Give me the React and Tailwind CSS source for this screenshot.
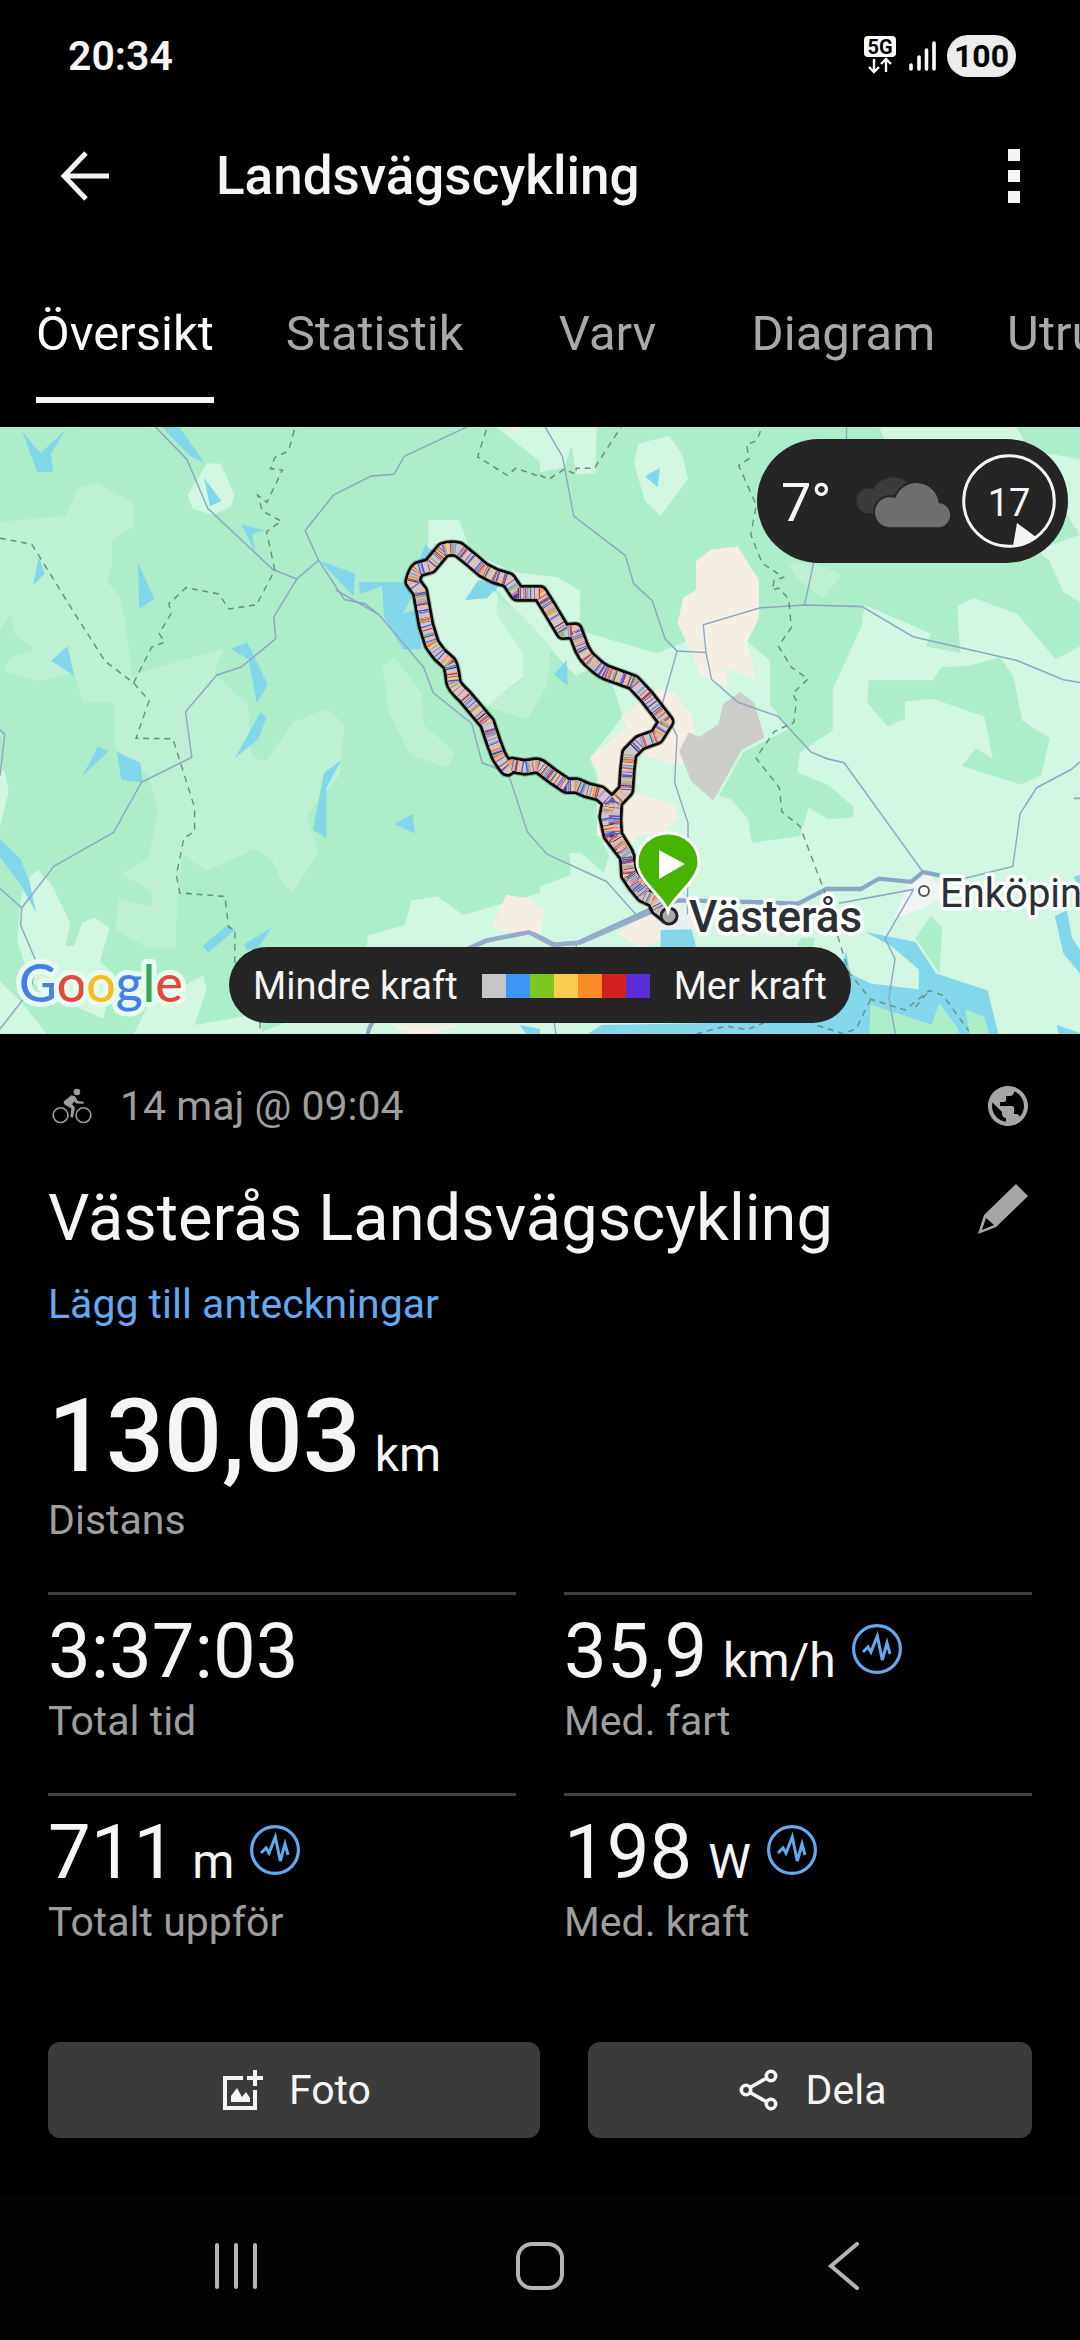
import { MdPublic } from "react-icons/md";

const tabs = ["Översikt", "Statistik", "Varv", "Diagram", "Utrustning"];

const metrics = [
  { label: "Total tid", value: "3:37:03" },
  { label: "Med. fart", value: "35,9", unit: "km/h", graph: true },
  { label: "Totalt uppför", value: "711", unit: "m", graph: true },
  { label: "Med. kraft", value: "198", unit: "W", graph: true }
];

const powerColors = ["#c6c6c6", "#3e97f5", "#7cc81e", "#fbcd4f", "#fb8b24", "#d3211f", "#5b2dd6"];

// Ride track, both directions share the last stretch into town
const loopPath =
  "M866 1190 L835 1165 L822 1140 L790 1125 L765 1095 L745 1065 L742 1010 L715 975 L692 945 L680 890 L688 845 L660 820 L620 810 L590 797 L560 797 L520 770 L480 740 Q470 735 460 738 L435 742 L395 735 L382 745 Q365 725 355 705 L340 665 L322 610 L290 572 L255 530 Q222 500 220 485 Q214 435 208 430 L180 405 Q160 380 155 370 L138 315 L128 260 L120 215 L98 185 Q105 155 115 148 L150 138 L190 90 Q212 82 235 88 L275 120 L310 150 L345 168 L385 180 L412 220 L480 220 L505 260 L550 335 L585 332 L605 385 Q620 415 635 425 Q660 450 680 458 L760 487 L800 530 L858 605 L830 650 L780 668 L748 700 L742 750 L738 810 L705 845 L702 900 L705 945 L738 1000 L750 1060 L795 1120";

const stripes = [
  { color: "#6a4fc4", dash: "4 31 3 47 7 23 3 64", offset: 0 },
  { color: "#e0453f", dash: "3 26 4 53 3 38 5 71", offset: 17 },
  { color: "#f59a55", dash: "5 19 3 43 8 57", offset: 9 },
  { color: "#f2cf72", dash: "4 23 6 35 3 49", offset: 31 },
  { color: "#6ea6ea", dash: "5 29 4 17 6 61", offset: 41 },
  { color: "#94b97e", dash: "4 67 6 59 3 83", offset: 53 },
  { color: "#4d2fb5", dash: "2 37 2 91 3 15", offset: 23 },
  { color: "#f3b8a0", dash: "6 33 5 21 4 45", offset: 3 },
  { color: "#c5303c", dash: "2 44 3 29 2 78", offset: 60 },
  { color: "#3a62d8", dash: "2 51 3 88 4 40", offset: 12 },
  { color: "#181818", dash: "2 118 2 173", offset: 70 }
];

const SignalIcons = () => (
  <svg viewBox="0 0 74 44" className="h-11 w-[74px]" aria-hidden="true">
    <rect x="1" y="2" width="32" height="21" rx="4" fill="#fff" />
    <text x="17" y="20" textAnchor="middle" fontSize="20" fontWeight="700" fontFamily="Roboto, sans-serif" fill="#000">
      5G
    </text>
    <path d="M11 25v12M6 33l5 5 5-5M23 38V26M18 30l5-5 5 5" fill="none" stroke="#fff" strokeWidth="2.4" />
    <path d="M48 31v4M56 23v12M63.500 16v19M71 9v26" fill="none" stroke="#fff" strokeWidth="3.600" strokeLinecap="round" />
  </svg>
);

const GraphIcon = () => (
  <svg viewBox="0 0 50 50" className="h-[50px] w-[50px] self-start" fill="none" stroke="#64a8f0" aria-hidden="true">
    <circle cx="25" cy="25" r="23.400" strokeWidth="3.200" />
    <path d="M11 28l5-5 3 5 6.300-16 5 24 4.700-17 3 11" strokeWidth="3" />
  </svg>
);

const BikeIcon = () => (
  <svg viewBox="36 54 120 110" className="h-9 w-10" aria-hidden="true">
    <g fill="none" stroke="#9e9e9e" strokeWidth="5">
      <circle cx="61" cy="137" r="22.500" />
      <circle cx="131" cy="137" r="22.500" />
    </g>
    <circle cx="111" cy="66" r="10" fill="#9e9e9e" />
    <path
      d="M94 76 L70 96 L72 104 L94 117 L91 143 L99 144 L105 113 L96 104 L103 95 L109 101 L132 102 L131 96 L114 94 L105 79 Z"
      fill="#9e9e9e"
    />
  </svg>
);

const PencilIcon = () => (
  <svg viewBox="0 0 50 50" className="h-[50px] w-[50px]" aria-hidden="true">
    <path d="M38 0L50 12L18 43L0 50L6 31ZM8 34L4 46L16 41Z" fill="#a6a6a6" fillRule="evenodd" />
  </svg>
);

const PhotoIcon = () => (
  <svg viewBox="-6 -4 48 48" className="h-12 w-12" fill="none" stroke="#f5f5f5" strokeWidth="4" aria-hidden="true">
    <path d="M20 8H2V38H32V20M32 0V16M24 8H40" />
    <path d="M8 32V26L14 18L19 27L23 22L27 28V32Z" fill="#f5f5f5" stroke="none" />
  </svg>
);

const ShareIcon = () => (
  <svg viewBox="0 0 48 48" className="h-12 w-12" fill="none" stroke="#f5f5f5" strokeWidth="3.600" aria-hidden="true">
    <circle cx="37" cy="10" r="4.700" />
    <circle cx="12" cy="24" r="4.700" />
    <circle cx="37" cy="38" r="4.700" />
    <path d="M16 21.500L33 12M16 26.500L33 36" />
  </svg>
);

const CloudIcon = () => (
  <svg viewBox="318 134 282 158" className="h-[53px] w-[94px]" aria-hidden="true">
    <path
      d="M357 249a37.500 37.500 0 0 1 0-76q8 0 14 3a65 65 0 0 1 120 10V249Z"
      fill="#3b3b3b"
    />
    <path
      d="M418 290a45 45 0 1 1 18-87a67 67 0 0 1 130 15a36 36 0 0 1-3 72Z"
      fill="#6e6e6e"
      stroke="#252525"
      strokeWidth="12"
      paintOrder="stroke"
    />
  </svg>
);

const WindIcon = () => (
  <svg viewBox="0 0 94 94" className="h-[94px] w-[94px]" role="img" aria-label="Vind 17">
    <circle cx="47" cy="47" r="45.300" fill="none" stroke="#f5f5f5" strokeWidth="3" />
    <path d="M55 69L74 83Q64 92 51 92Z" fill="#f5f5f5" />
    <text x="47" y="62" textAnchor="middle" fontSize="38" fontFamily="Roboto, sans-serif" fill="#f5f5f5">
      17
    </text>
  </svg>
);

const MapWest = () => (
  <svg x="0" y="-7" width="540" height="620" viewBox="0 0 1568 1568" preserveAspectRatio="none">
    <g fill="#beF1d4">
      <path d="M0 258L190 242L228 172L280 160L386 208L388 270L325 302V360L312 410L350 450L365 520L385 650L440 630L650 578L620 640L720 720L730 850L770 865L850 765L950 730L1000 770L985 900L890 1000L925 1090L850 1195L820 1170L790 1110L740 1085L600 1140L530 1100L515 1200L510 1335L430 1335L335 1290L345 1212L440 1232V1190L350 1148L430 1110L460 990L430 900L335 830L330 715H240L215 640L110 660L10 635L30 600L100 578L45 545L30 490L0 530Z" />
      <path d="M1110 620L1145 600L1225 690L1230 770L1320 840L1300 880L1190 845L1130 740Z" />
    </g>
    <g fill="#d1f6e2">
      <path d="M545 190L600 110L640 110L682 190L670 220L620 240L560 225Z" />
      <path d="M80 1160L110 1138L150 1175L205 1275L190 1330L215 1330L240 1270L275 1258L318 1285L290 1370L330 1400L300 1515L190 1470L90 1420L50 1320L60 1210Z" />
      <path d="M0 1420L60 1470L150 1568H0Z" />
      <path d="M380 1568L430 1480L590 1405L600 1440L565 1530L760 1500V1568Z" />
      <path d="M1068 1304L1175 1278L1195 1215L1270 1205L1345 1252L1568 1195V1568H700L900 1500L1060 1400Z" />
      <path d="M0 880L15 890L25 940L0 1030Z" />
      <path d="M1440 18H1568V105Z" />
    </g>
    <g fill="#f5efe3">
      <path d="M1432 1275L1470 1202L1540 1210L1568 1240V1310L1440 1290Z" />
      <path d="M1135 1530H1330L1210 1568Z" />
      <path d="M1465 18H1520L1500 28Z" />
    </g>
    <g fill="#82d7eb">
      <path d="M65 30L118 84L190 25L148 85L154 132H108Z" />
      <path d="M470 18H520L596 110L550 90Z" />
      <path d="M592 146L643 205L610 218Z" />
      <path d="M700 263L768 280L732 287L742 335Z" />
      <path d="M112 345L130 388L96 418Z" />
      <path d="M401 363L449 452L404 478Z" />
      <path d="M148 609L196 572L216 647Z" />
      <path d="M670 579L718 562L778 670L745 716L722 605Z" />
      <path d="M756 740L774 752L750 807L682 855Z" />
      <path d="M240 900L284 826L315 838Z" />
      <path d="M340 840L408 867L413 916L352 910Z" />
      <path d="M992 860L948 930V1058L909 1036L941 892Z" />
      <path d="M1145 1022L1198 996L1205 1046Z" />
      <path d="M928 356L1031 388L1027 446Z" />
      <path d="M1042 410H1180L1200 440L1170 490L1205 480L1225 580H1170L1115 500L1110 420L1045 440Z" />
      <path d="M1215 360L1235 315L1260 335L1240 380Z" />
      <path d="M0 1060L60 1110L85 1165L105 1246L60 1175L0 1105Z" />
      <path d="M588 1330L660 1278L682 1290L605 1347Z" />
      <path d="M710 1325L790 1283L745 1340H715Z" />
      <path d="M1350 455L1390 400L1460 420L1415 452Z" />
      <path d="M1510 1530L1568 1540V1568H1540Z" />
    </g>
    <g fill="none" stroke="#8ea6c6" strokeWidth="4">
      <path d="M452 18L543 100L603 223L792 378L862 402L925 355L886 280L968 190L1078 142L1144 137L1174 92L1355 18" />
      <path d="M862 402L795 498L801 553L700 625L630 645L539 738L557 853L411 916L330 1043L157 1128L63 1234L60 1278L105 1370L90 1440L0 1540" />
      <path d="M63 1234L0 1185" />
      <path d="M925 355L1000 454L1060 465L1100 492L1230 625L1258 690L1370 768L1400 867L1475 892L1532 1043L1568 1078" />
      <path d="M975 430L1100 492" />
      <path d="M0 783L14 795L0 900" />
      <path d="M1365 1335L1410 1317L1538 1294L1568 1308" strokeWidth="10" />
      <path d="M1065 1568Q1070 1530 1090 1515" strokeWidth="12" />
    </g>
    <g fill="none" stroke="#64937a" strokeWidth="4" strokeDasharray="17 14">
      <path d="M0 299L92 314L210 480L305 610L388 665L433 710L395 805L502 806L565 980V1040L534 1058L512 1150L522 1196L653 1205L664 1283L682 1288V1400L755 1520V1568" />
      <path d="M388 665L440 575L478 562L462 540L498 488L490 465L540 424L635 440L665 478L745 467L798 380L774 282L817 256L762 230L748 190L775 208L820 127L785 123L798 95L838 78L857 18" />
      <path d="M1412 25L1387 93L1473 140L1498 122L1568 143" />
    </g>
  </svg>
);

const MapEast = () => (
  <svg x="540" y="-7" width="540" height="620" viewBox="0 0 1568 1568" preserveAspectRatio="none">
    <g fill="#d1f6e2">
      <path d="M0 18H165L160 135L105 138L92 65L70 120L0 132Z" />
      <path d="M285 60L375 40L412 85L430 150L350 242L305 205L273 110Z" />
      <path d="M985 18H1385L1420 75L1568 100V460L1520 435L1478 355L1440 330L1568 290L1500 200L1200 60L1010 70Z" />
      <path d="M0 410L50 397L117 432L115 533L270 572L340 590L480 540L600 560L668 608V720L725 780L590 840L520 950L555 960L605 1010L615 1070L755 1052L780 980L835 1010L910 1005V978L840 925L747 890L755 840L850 785V680L935 520L942 468L1135 540L1122 572L1220 590L1212 470L1260 450L1385 490L1497 605L1568 572V1568H0V1180L90 1150L85 1095L120 1095L185 1145L200 1100L165 1040V900L145 855L240 750L215 680L160 620L110 645L0 520Z" />
    </g>
    <path d="M720 362H800L875 392L820 452L745 400Z" fill="#beF1d4" />
    <g fill="#aceeca">
      <path d="M955 658H1140L1165 625L1245 622L1335 600L1375 650L1400 760L1480 805L1455 900L1395 922L1225 875L1265 830L1315 857L1290 750L1140 705L1060 712V755L1010 775L950 715Z" />
      <path d="M1090 1310L1135 1255L1168 1285L1160 1400Z" />
      <path d="M745 1330L760 1310H800L790 1335Z" />
    </g>
    <g fill="#f5efe3">
      <path d="M453 358L495 328L574 320L636 405V500L602 560L625 655L540 628L545 675L470 650L440 590L400 515L415 450L453 430Z" />
      <path d="M145 855L255 775L235 752L340 680L390 690L440 745L450 800L410 875L350 862L275 840L265 940L395 975V1010L360 1045L290 1050L255 1085L165 1050L170 890Z" />
      <path d="M225 1300L320 1230L430 1240L470 1280L290 1335Z" />
      <path d="M0 1230L14 1240L0 1300Z" />
    </g>
    <path d="M582 688L622 715L652 803L585 835L503 962L440 915L404 838L432 790L462 802L518 770L532 718Z" fill="#cdcdca" />
    <path d="M1070 1170L1130 1150L1190 1200L1100 1240L1030 1260Z" fill="#eef5f2" />
    <path d="M320 1220L420 1200L440 1290H350Z" fill="#e9eef0" />
    <g fill="#82d7eb">
      <path d="M305 143L348 121L342 170Z" />
      <path d="M42 642L80 606V670Z" />
      <path d="M350 1290L440 1288L455 1340H350Z" />
      <path d="M945 1295L1090 1320L1150 1400L1300 1443L1335 1568H110L180 1530L800 1520L890 1345L900 1400L960 1425L1100 1440V1390L1020 1330Z" />
      <path d="M1495 1255L1530 1240L1545 1310L1568 1340V1400L1520 1350Z" />
      <path d="M1550 1155L1568 1150V1190Z" />
      <path d="M1500 1530L1568 1550V1568H1510Z" />
    </g>
    <g fill="#aceeca">
      <path d="M960 1478L1140 1530L1120 1568H955Z" />
      <path d="M1160 1475L1215 1540L1220 1568H1120Z" />
      <path d="M1235 1490L1290 1510L1310 1568H1250Z" />
    </g>
    <g fill="none" stroke="#8ea6c6" strokeWidth="4">
      <path d="M15 18L65 92L98 243L248 343L272 414L326 457L364 555L398 584L482 588" />
      <path d="M398 584L355 718L398 800L391 917L430 1020L428 1250" />
      <path d="M890 18V50M795 360L768 468" />
      <path d="M1568 664L1520 657L1385 608L1083 548L935 472L768 468L640 475L474 518L482 588L498 656L575 714L692 750L787 840L835 857L883 867L1112 1143" />
      <path d="M1568 865L1542 884L1442 930L1394 996L1373 1129L1220 1162" />
      <path d="M0 1078L20 1098L193 1167L280 1252" />
      <path d="M1085 1187L868 1222M1085 1187L1002 1312L1031 1363L1013 1462L1035 1568" />
      <path d="M1550 957H1568M105 1325V1335M42 1525L48 1568" />
      <path d="M0 1308L42 1327L110 1322L315 1240L400 1215L575 1218L750 1223L832 1186H932L984 1160L1078 1168L1112 1143L1160 1152" strokeWidth="11" />
    </g>
    <g fill="none" stroke="#64937a" strokeWidth="4" strokeDasharray="17 14">
      <path d="M0 140L25 150L70 125L105 137V122H158L235 18" />
      <path d="M640 28L630 52L600 62L607 98L577 115L628 215L612 290L645 362L707 398L680 405L675 430L692 425L722 452L730 525L692 572L730 625L778 655L733 692L745 710L737 765L680 788L627 855L695 930L702 990L755 1028L825 1190L880 1350L900 1400L960 1465L1060 1492L1130 1443L1170 1455L1245 1545" />
      <path d="M455 1552L540 1533L600 1542L650 1525M960 1465L918 1540L880 1552L800 1530" />
      <path d="M1090 1485L1130 1443" />
    </g>
  </svg>
);

const Route = () => (
  <svg x="380" y="93" width="320" height="430" viewBox="0 0 960 1290">
    <path d="M145 0H237L275 100L400 155L530 172L600 212V330L590 470L430 300L360 220L210 95L145 85Z" fill="#d1f6e2" />
    <path d="M125 160L205 100L240 110L355 225L350 280L430 400V470L320 560L235 480L150 350Z" fill="#d1f6e2" />
    <path d="M355 235L420 280L512 380L500 500L440 600L320 558L430 480V400L350 280Z" fill="#beF1d4" />
    <path d="M345 1205L380 1125L440 1135L495 1175L460 1240L345 1225Z" fill="#f5efe3" />
    <path d="M255 240L295 180L360 195L320 235Z" fill="#82d7eb" />
    <path d="M523 463L560 421V495Z" fill="#82d7eb" />
    <path d="M255 1290L320 1262L447 1237L520 1275L600 1268L815 1175" fill="none" stroke="#9aaccb" strokeWidth="13" />
    <g fill="none" strokeLinejoin="round">
      <path d={loopPath} stroke="#000" strokeOpacity="0.25" strokeWidth="56" />
      <path d={loopPath} stroke="#0c0c0c" strokeWidth="50" />
      <path d={loopPath} stroke="#cbc6cf" strokeWidth="33" />
      {stripes.map((stripe) => (
        <path
          key={stripe.color}
          d={loopPath}
          stroke={stripe.color}
          strokeWidth="33"
          strokeDasharray={stripe.dash}
          strokeDashoffset={stripe.offset}
        />
      ))}
    </g>
  </svg>
);

const RideMap = () => (
  <svg viewBox="0 0 1080 607" className="block w-full bg-[#aceeca]" role="img" aria-label="Karta">
    <MapWest />
    <MapEast />
    <Route />

    {/* start marker */}
    <circle cx="669" cy="489" r="8" fill="#a8a8a8" stroke="#222" strokeWidth="3" />
    <path
      d="M668 484C664 470 637 454 637 435A31 29 0 0 1 699 435C699 454 672 470 668 484Z"
      fill="#46b400"
      stroke="#fff"
      strokeWidth="3"
    />
    <path d="M659 423L685 437L659 452Z" fill="#fff" />

    <circle cx="924" cy="464" r="5" fill="#fff" stroke="#555" strokeWidth="2" />
    <g fontFamily="Roboto, sans-serif" fill="#2b3035" stroke="#fff" strokeWidth="7" strokeLinejoin="round" paintOrder="stroke">
      <text x="689" y="505" fontSize="44" fontWeight="500">
        Västerås
      </text>
      <text x="940" y="480" fontSize="40">
        Enköping
      </text>
    </g>

    <text
      x="19"
      y="575"
      fontSize="52"
      fontFamily="Lato, sans-serif"
      fontWeight="500"
      stroke="#e8fbf0"
      strokeWidth="10"
      strokeLinejoin="round"
      paintOrder="stroke"
    >
      <tspan fill="#4580ea">G</tspan>
      <tspan fill="#e04a3f">o</tspan>
      <tspan fill="#f5bd1d">o</tspan>
      <tspan fill="#4580ea">g</tspan>
      <tspan fill="#34a853">l</tspan>
      <tspan fill="#e04a3f">e</tspan>
    </text>
  </svg>
);

const Metric = ({ label, value, unit, graph }) => (
  <div className="border-t-3 border-[#424242] pt-3">
    <div className="mb-0.5 flex h-[88px] items-center">
      <p className="text-[76px] leading-[88px]">
        {value}
        {unit && <span className="ml-4 text-5xl">{unit}</span>}
      </p>
      {graph && (
        <button type="button" aria-label={`Visa ${label}`} className="mb-1 ml-4">
          <GraphIcon />
        </button>
      )}
    </div>
    <p className="text-[41px] leading-12 text-[#9e9e9e]">{label}</p>
  </div>
);

const App = () => {
  return (
    <div className="flex min-h-screen flex-col overflow-x-hidden bg-black font-[Roboto,sans-serif] text-[#f5f5f5]">
      <div className="flex h-28 items-center justify-between pr-16 pl-[68px]">
        <span className="text-[41px] leading-12 font-semibold">20:34</span>
        <div className="flex items-center gap-2.5">
          <SignalIcons />
          <span className="rounded-full bg-[#ececec] px-[7px] text-[32px] leading-[42px] font-bold text-black">100</span>
        </div>
      </div>

      <header className="flex h-32 items-center pr-[60px] pl-[60px]">
        <button type="button" aria-label="Tillbaka">
          <svg viewBox="0 0 50 50" className="h-[50px] w-[50px]" fill="none" stroke="#f5f5f5" strokeWidth="5">
            <path d="M49 25H4M26 2L4 25L26 48" />
          </svg>
        </button>
        <h1 className="ml-[106px] flex-1 text-[53px] leading-16 font-medium">Landsvägscykling</h1>
        <button type="button" aria-label="Mer" className="flex flex-col gap-[9px]">
          <span className="h-3 w-3 bg-[#f5f5f5]" />
          <span className="h-3 w-3 bg-[#f5f5f5]" />
          <span className="h-3 w-3 bg-[#f5f5f5]" />
        </button>
      </header>

      <nav className="flex pt-[66px] pb-6">
        {tabs.map((tab, index) => (
          <button key={tab} type="button" className="flex min-w-[216px] shrink-0 justify-center px-9">
            <span
              className={`border-b-6 pb-[35px] text-[49px] leading-14 ${
                index === 0 ? "border-[#f5f5f5] text-white" : "border-transparent text-[#a8a8a8]"
              }`}
            >
              {tab}
            </span>
          </button>
        ))}
      </nav>

      <section className="relative">
        <RideMap />
        <div className="absolute top-3 right-3 flex h-[124px] items-center rounded-full bg-[#252525] pr-3 pl-6">
          <span className="w-[75px] pt-1 text-[54px] leading-16">7°</span>
          <CloudIcon />
          <span className="ml-3">
            <WindIcon />
          </span>
        </div>
        <div className="absolute inset-x-0 bottom-[11px] flex justify-center">
          <div className="flex h-[76px] items-center gap-6 rounded-full bg-[#252525] px-6 pt-0.5 text-[38px] leading-12">
            <span>Mindre kraft</span>
            <div className="flex">
              {powerColors.map((color) => (
                <span key={color} className="h-6 w-6" style={{ backgroundColor: color }} />
              ))}
            </div>
            <span>Mer kraft</span>
          </div>
        </div>
      </section>

      <main className="flex-1 px-12 pt-12 pb-[58px]">
        <div className="flex h-12 items-center px-1">
          <BikeIcon />
          <p className="ml-7 flex-1 text-[41px] leading-12 text-[#9e9e9e]">14 maj @ 09:04</p>
          <MdPublic className="-mr-1 h-12 w-12 text-[#a6a6a6]" />
        </div>

        <div className="mt-[50px] flex items-start justify-between pr-1">
          <h2 className="text-[65px] leading-[76px]">Västerås Landsvägscykling</h2>
          <button type="button" aria-label="Redigera" className="mt-1">
            <PencilIcon />
          </button>
        </div>
        <a href="#anteckningar" className="mt-6 block text-[41px] leading-12 text-[#64a8f0]">
          Lägg till anteckningar
        </a>

        <p className="mt-12 text-[102px] leading-[120px] font-medium">
          130,03<span className="ml-3.5 text-5xl font-normal">km</span>
        </p>
        <p className="text-[41px] leading-12 text-[#9e9e9e]">Distans</p>

        <div className="mt-12 grid grid-cols-2 gap-12">
          {metrics.map((metric) => (
            <Metric key={metric.label} {...metric} />
          ))}
        </div>

        <div className="-mr-12 mt-24 -ml-12 grid grid-cols-2">
          <div className="pl-12">
            <button
              type="button"
              className="flex h-24 w-full items-center justify-center gap-6 rounded-xl bg-[#3b3b3b] text-[41px] leading-12"
            >
              <PhotoIcon />
              Foto
            </button>
          </div>
          <div className="px-12">
            <button
              type="button"
              className="flex h-24 w-full items-center justify-center gap-6 rounded-xl bg-[#3b3b3b] text-[41px] leading-12"
            >
              <ShareIcon />
              Dela
            </button>
          </div>
        </div>
      </main>

      <footer className="flex h-36 items-center justify-around bg-[#030303] px-[86px] pb-1">
        <button type="button" aria-label="Senaste appar">
          <svg viewBox="0 0 48 48" className="h-12 w-12" stroke="#b5b5b5" strokeWidth="4" strokeLinecap="round">
            <path d="M4 3V45M23 3V45M42 3V45" />
          </svg>
        </button>
        <button type="button" aria-label="Hem">
          <svg viewBox="0 0 48 48" className="h-12 w-12" fill="none" stroke="#b5b5b5" strokeWidth="4">
            <rect x="2" y="2" width="44" height="44" rx="14" />
          </svg>
        </button>
        <button type="button" aria-label="Bakåt">
          <svg viewBox="0 0 48 48" className="h-12 w-12" fill="none" stroke="#b5b5b5" strokeWidth="4" strokeLinecap="round">
            <path d="M38 2L12 24L38 46" />
          </svg>
        </button>
      </footer>
    </div>
  );
};

export default App;
